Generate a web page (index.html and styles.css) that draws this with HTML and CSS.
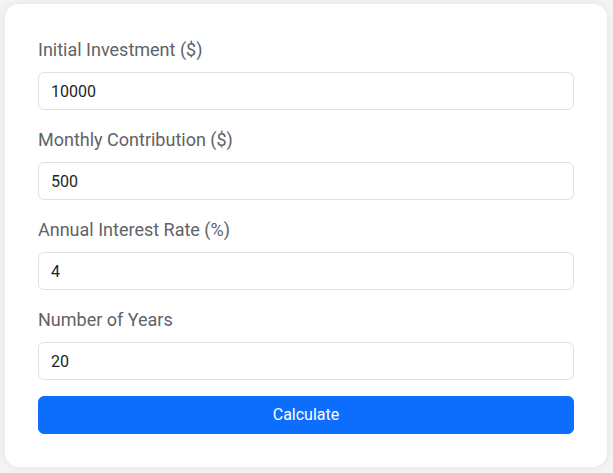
FILE: index.html
```html
<!DOCTYPE html>
<html lang="en">
<head>
<meta charset="utf-8">
<title>Investment Calculator</title>
<link rel="stylesheet" href="styles.css">
</head>
<body>
<div class="card">
  <form class="calc-form">
    <div class="field">
      <label class="field-label" for="initial">Initial Investment ($)</label>
      <input class="field-input" id="initial" type="number" value="10000">
    </div>
    <div class="field">
      <label class="field-label" for="monthly">Monthly Contribution ($)</label>
      <input class="field-input" id="monthly" type="number" value="500">
    </div>
    <div class="field">
      <label class="field-label" for="rate">Annual Interest Rate (%)</label>
      <input class="field-input" id="rate" type="number" value="4">
    </div>
    <div class="field">
      <label class="field-label" for="years">Number of Years</label>
      <input class="field-input" id="years" type="number" value="20">
    </div>
    <button class="calc-button" type="button">Calculate</button>
  </form>
</div>
</body>
</html>
```

FILE: styles.css
```css
html, body {
  margin: 0;
  padding: 0;
}
body {
  background: #f4f4f4;
  font-family: Roboto, "Liberation Sans", Arial, sans-serif;
  padding: 4px 6px 6px 5px;
}
.card {
  background: #ffffff;
  border-radius: 14px;
  box-shadow: 0 0 10px rgba(0, 0, 0, 0.07);
  padding: 32px 33px 33px 33px;
}
.calc-form {
  display: flex;
  flex-direction: column;
}
.field {
  display: flex;
  flex-direction: column;
  margin-bottom: 16px;
}
.field-label {
  font-size: 18px;
  line-height: 28px;
  color: #5f6368;
  margin-bottom: 8px;
}
.field-input {
  box-sizing: border-box;
  height: 38px;
  padding: 6px 12px;
  font-family: Roboto, "Liberation Sans", Arial, sans-serif;
  font-size: 16px;
  line-height: 24px;
  color: #212529;
  background: #ffffff;
  border: 1px solid #dee2e6;
  border-radius: 6px;
  outline: none;
  -moz-appearance: textfield;
}
.field-input::-webkit-outer-spin-button,
.field-input::-webkit-inner-spin-button {
  -webkit-appearance: none;
  margin: 0;
}
.calc-button {
  height: 38px;
  border: 1px solid #0d6efd;
  border-radius: 6px;
  background: #0d6efd;
  color: #ffffff;
  font-family: Roboto, "Liberation Sans", Arial, sans-serif;
  font-size: 16px;
  line-height: 24px;
  padding: 6px 12px;
  cursor: pointer;
}
```
